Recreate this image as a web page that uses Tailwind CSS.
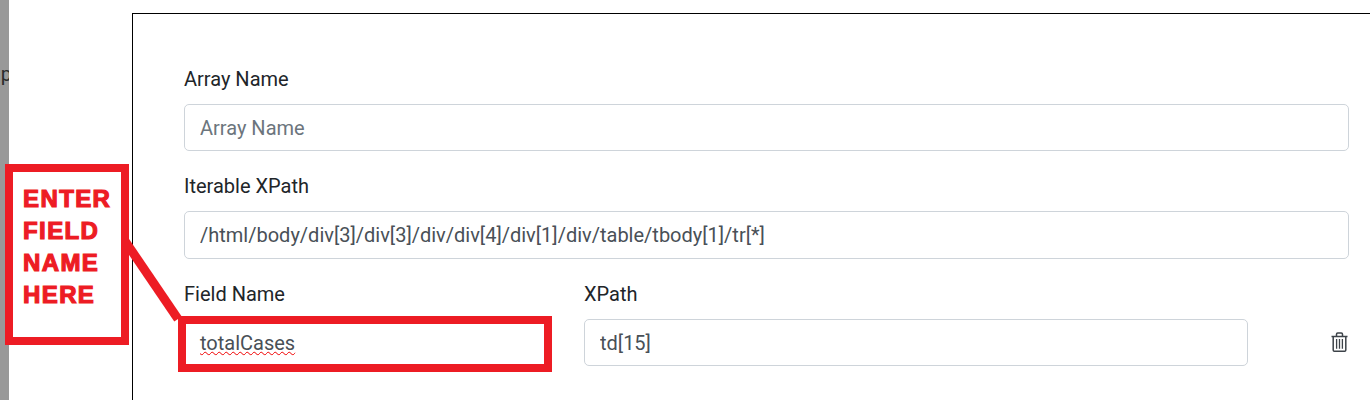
<!DOCTYPE html>
<html lang="en">
<head>
    <meta charset="UTF-8">
    <title>Field Name</title>
    <script src="https://cdn.jsdelivr.net/npm/@tailwindcss/browser@4"></script>
</head>
<body class="relative h-[400px] w-[1370px] overflow-hidden bg-white font-['Roboto',sans-serif]">

    <!-- dimmed page behind the modal -->
    <div class="absolute left-0 top-0 h-full w-[9px] overflow-hidden bg-[#999999]">
        <span class="absolute right-[-3px] top-[62px] text-[20px] leading-[24px] text-[#2b2b2b]">up</span>
    </div>

    <!-- modal -->
    <div class="absolute left-[132px] top-[13px] h-[400px] w-[1250px] border-l border-t border-black bg-white pl-[51px] pr-[32px] pt-[53px]">
        <label class="block text-[20px] leading-[24px] text-[#212529]">Array Name</label>
        <input class="mt-[13px] block h-[47px] w-[1165px] rounded-[5px] border border-[#ced4da] px-[15px] text-[20px] text-[#495057] placeholder:text-[#6c757d]" placeholder="Array Name">

        <label class="mt-[23px] block text-[20px] leading-[24px] text-[#212529]">Iterable XPath</label>
        <input class="mt-[13px] block h-[48px] w-[1165px] rounded-[5px] border border-[#ced4da] px-[15px] text-[20px] text-[#495057]" value="/html/body/div[3]/div[3]/div/div[4]/div[1]/div/table/tbody[1]/tr[*]">

        <div class="mt-[23px] flex">
            <div class="w-[364px]">
                <label class="block text-[20px] leading-[24px] text-[#212529]">Field Name</label>
                <div class="mt-[13px] flex h-[47px] w-full items-center rounded-[5px] border border-[#ced4da] px-[15px] text-[20px] text-[#495057]">
                    <span class="underline decoration-wavy decoration-[#f00000] decoration-1 underline-offset-1">totalCases</span>
                </div>
            </div>
            <div class="ml-[36px] w-[664px]">
                <label class="block text-[20px] leading-[24px] text-[#212529]">XPath</label>
                <input class="mt-[13px] block h-[47px] w-full rounded-[5px] border border-[#ced4da] px-[15px] text-[20px] text-[#495057]" value="td[15]">
            </div>
            <div class="ml-[83px] flex items-end pb-[14px]">
                <svg class="h-[20px] w-[17px] text-[#3d4349]" viewBox="0 0 17 20" fill="none" stroke="currentColor">
                    <path d="M.5 4.5h16M5.5 4V2.2Q5.5 1 6.7 1h3.6q1.2 0 1.2 1.2V4" stroke-width="1.5"/>
                    <path d="M2.2 4.5v13.5q0 1.3 1.3 1.3h10q1.3 0 1.3-1.3V4.5" stroke-width="1.5"/>
                    <path d="M5.6 7v9.8M8.5 7v9.8M11.4 7v9.8" stroke-width="1.3"/>
                </svg>
            </div>
        </div>
    </div>

    <!-- red annotation -->
    <div class="absolute left-[5px] top-[164px] h-[181px] w-[124px] border-[8px] border-[#ed1c24] bg-white pl-[10px] pt-[11px] font-['Liberation_Sans',sans-serif] text-[24px] font-bold leading-[32px] tracking-[1.4px] text-[#ed1c24] [-webkit-text-stroke:1.2px_#ed1c24]">
        ENTER<br>FIELD<br>NAME<br>HERE
    </div>
    <svg class="absolute left-[120px] top-[235px]" width="70" height="90" viewBox="0 0 70 90">
        <path d="M5 6 L58 84" stroke="#ed1c24" stroke-width="9" fill="none"/>
    </svg>
    <div class="absolute left-[178px] top-[316px] h-[56px] w-[374px] border-[8px] border-[#ed1c24]"></div>

</body>
</html>
